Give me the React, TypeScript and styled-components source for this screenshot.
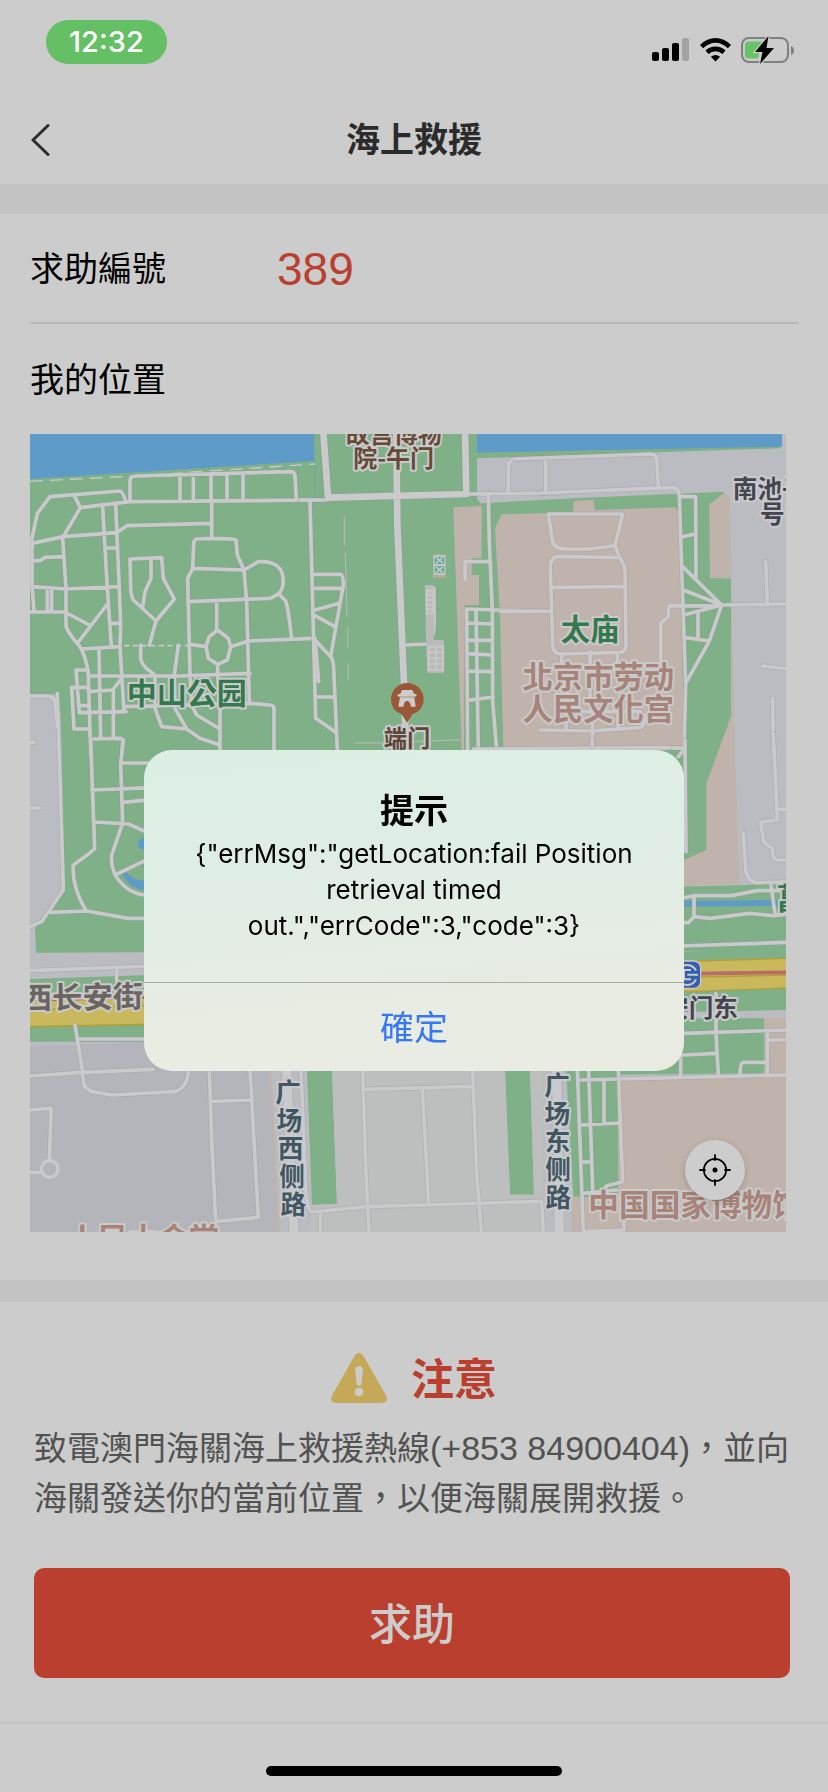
import React from "react";
import styled, { createGlobalStyle } from "styled-components";

const colors = {
  page: "#cccccc",
  band: "#c3c3c3",
  line: "#b7b7b7",
  faintLine: "#c3c3c3",
  ink: "#000000",
  title: "#2b2b2b",
  body: "#525252",
  red: "#bb3f2f",
  blue: "#3478f6",
  pill: "#64bf65",
  amber: "#c5a959",
};

const mapColors = {
  ground: "#bbbcc2",
  block: "#b4b5bb",
  plaza: "#bdbebe",
  park: "#80b088",
  culture: "#c0b3ab",
  water: "#5f9bc9",
  road: "#cacacc",
  avenue: "#c9b85c",
  avenueEdge: "#b09f3c",
};

const sans = `"Liberation Sans", "Noto Sans CJK TC", sans-serif`;
const ui = `Inter, "Noto Sans CJK TC", sans-serif`;

const GlobalStyle = createGlobalStyle`
  *, *::before, *::after { box-sizing: border-box; }
  body { margin: 0; background: ${colors.page}; color: ${colors.ink}; font-family: ${sans}; }
  h1, h2, p, dl, dt, dd { margin: 0; font-weight: 400; }
  button { border: 0; padding: 0; background: none; color: inherit; font: inherit; cursor: pointer; }
`;

const Screen = styled.div`
  display: flex;
  flex-direction: column;
  min-height: 100vh;
  background: ${colors.page};
`;

const StatusBar = styled.div`
  display: flex;
  align-items: flex-start;
  justify-content: space-between;
  height: 96px;
  padding: 20px 34px 0 46px;
`;

const TimePill = styled.time`
  padding: 0 23px;
  border-radius: 22px;
  background: ${colors.pill};
  color: #fff;
  font: 500 29px/44px ${ui};
`;

const StatusIcons = styled.div`
  display: flex;
  align-items: center;
  gap: 10px;
  height: 60px;
`;

const Header = styled.header`
  display: grid;
  grid-template-columns: 60px 1fr 60px;
  align-items: center;
  height: 88px;
`;

const BackButton = styled.button`
  display: flex;
  align-items: center;
  height: 88px;
  padding-left: 30px;
`;

const PageTitle = styled.h1`
  color: ${colors.title};
  font-size: 34px;
  font-weight: 700;
  line-height: 50px;
  text-align: center;
`;

const Band = styled.div<{ $height: number }>`
  height: ${(p) => p.$height}px;
  background: ${colors.band};
`;

const Details = styled.section`
  padding: 0 30px 48px;
`;

const Row = styled.dl`
  display: flex;
  align-items: center;
  height: 110px;
  padding-top: 2px;
  border-bottom: 2px solid ${colors.line};
`;

const RowLabel = styled.dt`
  width: 247px;
  font-size: 34px;
  line-height: 50px;
`;

const RowValue = styled.dd`
  color: ${colors.red};
  font-size: 46px;
  line-height: 50px;
`;

const LocationLabel = styled.h2`
  padding-top: 2px;
  font-size: 34px;
  line-height: 108px;
`;

const MapFrame = styled.div`
  position: relative;
  margin-right: 12px;
`;

const MapDrawing = styled.svg`
  display: block;
  width: 100%;
  height: auto;
`;

const LocateButton = styled.button`
  position: absolute;
  right: 41px;
  bottom: 32px;
  display: grid;
  place-items: center;
  width: 60px;
  height: 60px;
  border-radius: 50%;
  background: #cdcdcd;
  box-shadow: 0 2px 6px rgba(0, 0, 0, 0.18);
`;

const Notice = styled.section`
  padding: 46px 34px 44px;
  border-bottom: 2px solid ${colors.faintLine};
`;

const NoticeHeading = styled.div`
  display: flex;
  align-items: center;
  justify-content: center;
  gap: 24px;
  height: 60px;
  margin-bottom: 16px;
`;

const NoticeTitle = styled.h2`
  padding-top: 4px;
  color: ${colors.red};
  font-size: 43px;
  font-weight: 700;
  line-height: 60px;
`;

const NoticeText = styled.p`
  color: ${colors.body};
  font-size: 33px;
  line-height: 50px;
`;

const Phone = styled.span`
  font-size: 34px;
  line-height: 1;
`;

const HelpButton = styled.button`
  display: block;
  width: calc(100% - 4px);
  height: 110px;
  margin-top: 44px;
  padding-bottom: 4px;
  border-radius: 10px;
  background: ${colors.red};
  color: ${colors.page};
  font-size: 43px;
  font-weight: 500;
`;

const HomeArea = styled.footer`
  display: flex;
  justify-content: center;
  padding: 42px 0 16px;
`;

const HomeIndicator = styled.div`
  width: 296px;
  height: 10px;
  border-radius: 5px;
  background: #000;
`;

const Overlay = styled.div`
  position: fixed;
  inset: 0;
  display: flex;
  align-items: center;
  justify-content: center;
  padding-top: 28px;
`;

const Dialog = styled.div`
  width: 540px;
  max-width: 90%;
  overflow: hidden;
  border-radius: 28px;
  background: linear-gradient(175deg, #dceee3 0%, #dfeee5 35%, #e8ece3 75%, #eaece2 100%);
  text-align: center;
`;

const DialogBody = styled.div`
  padding: 36px 50px 38px;
`;

const DialogTitle = styled.h2`
  font-size: 34px;
  font-weight: 700;
  line-height: 50px;
`;

const DialogText = styled.p`
  font: 400 26px/36px ${ui};
`;

const ConfirmButton = styled.button`
  width: 100%;
  height: 89px;
  padding-bottom: 2px;
  border-top: 1px solid #a9b09f;
  color: ${colors.blue};
  font-size: 34px;
`;

function SignalIcon() {
  return (
    <svg width="38" height="24" viewBox="0 0 38 24" aria-hidden="true">
      <rect x="0" y="14" width="7" height="9" rx="2" />
      <rect x="10" y="10" width="7" height="13" rx="2" />
      <rect x="20" y="5" width="7" height="18" rx="2" />
      <rect x="30" y="0" width="7" height="23" rx="2" fill="#a3a3a3" />
    </svg>
  );
}

function WifiIcon() {
  return (
    <svg width="31" height="24" viewBox="0 0 31 24" aria-hidden="true">
      <g fill="none" stroke="#000" strokeWidth="4.6">
        <path d="M1.6 8.6Q8 2.4 15.5 2.4T29.4 8.6" />
        <path d="M7 14.2Q10.6 10.9 15.5 10.9T24 14.2" />
      </g>
      <path d="M15.5 23.4L10.9 18.8Q15.5 15 20.1 18.8Z" />
    </svg>
  );
}

function BatteryIcon() {
  return (
    <svg width="53" height="28" viewBox="0 0 53 28" aria-hidden="true">
      <rect x="1" y="2" width="46" height="24" rx="7" fill="none" stroke="#808080" strokeWidth="2" />
      <path d="M50 10Q53 11 53 14.500T50 19Z" fill="#808080" />
      <path d="M7.500 5.500H22L17 22.500H7.500Q4 22.500 4 19V9Q4 5.500 7.500 5.500Z" fill="#66c466" />
      <path d="M27.500 0L14 16H21.500L19 28L33 12H25.500Z" stroke={colors.page} strokeWidth="2.400" paintOrder="stroke" />
    </svg>
  );
}

function BackIcon() {
  return (
    <svg width="20" height="34" viewBox="0 0 20 34" aria-hidden="true">
      <path d="M18 2.500L3 17L18 31.500" fill="none" stroke={colors.title} strokeWidth="3" strokeLinecap="round" strokeLinejoin="round" />
    </svg>
  );
}

function WarningIcon() {
  return (
    <svg width="56" height="50" viewBox="0 0 56 50" aria-hidden="true">
      <path d="M23.800 2.400Q28-2.400 32.200 2.400L55 42.500Q58 49.500 51 50H5Q-2 49.500 1 42.500Z" fill={colors.amber} />
      <path d="M24 15.500Q28 10.500 32 15.500L30.300 31.500Q28 34 25.700 31.500Z" fill={colors.page} />
      <circle cx="28" cy="39" r="4.300" fill={colors.page} />
    </svg>
  );
}

function LocateIcon() {
  return (
    <svg width="32" height="32" viewBox="0 0 32 32" aria-hidden="true">
      <circle cx="16" cy="16" r="11.200" fill="none" stroke="#000" strokeWidth="1.700" />
      <circle cx="16" cy="16" r="2.500" />
      <path d="M16 1V6M16 26V31M1 16H6M26 16H31" stroke="#000" strokeWidth="1.800" strokeLinecap="round" />
    </svg>
  );
}

type RoadsProps = { x: number; y: number; d: string; width?: number };

function Roads({ x, y, d, width = 11 }: RoadsProps) {
  return (
    <g transform={`translate(${x} ${y})`} fill="none" strokeLinejoin="round" strokeLinecap="round">
      <path d={d} stroke="#8f9399" strokeOpacity="0.35" strokeWidth={width + 4} />
      <path d={d} stroke={mapColors.road} strokeWidth={width} />
    </g>
  );
}

type LabelProps = {
  x: number;
  y: number;
  size: number;
  color: string;
  anchor?: "start" | "middle";
  rotate?: number;
  children: string;
};

function Label({ x, y, size, color, anchor = "middle", rotate = 0, children }: LabelProps) {
  return (
    <text
      x={x}
      y={y}
      fontSize={size}
      fill={color}
      textAnchor={anchor}
      transform={rotate ? `rotate(${rotate} ${x} ${y})` : undefined}
      stroke={mapColors.road}
      strokeWidth="12"
      strokeLinejoin="round"
      paintOrder="stroke"
      fontFamily={`"Noto Sans CJK SC", sans-serif`}
      fontWeight="700"
    >
      {children}
    </text>
  );
}

const westParkRoads = `
M330 228V165Q330 155 350 153L810 140Q825 140 825 155L829 222
M480 152V225M520 150V225M573 148V230M621 146V225M669 144V225
M36 340L52 265L90 215L300 198Q308 198 318 232M163 212L181 248L130 335
M181 248L330 230L900 225M36 355L130 335L290 323L320 302L575 295M575 230V340
M36 345V480L42 560M36 407H60L75 397L130 395
M128 340L138 490V600Q140 620 180 665Q200 700 205 750L212 990
M36 485L138 492L298 485M82 488V560M95 490V560M30 561H135L208 600
M248 245L262 490L274 665M287 240L297 470L302 600L300 665L312 860
M258 369H290M270 595H300M260 540L172 655M185 672L300 665
M205 753H480L690 745M237 672L242 940M205 800L278 795L305 760M280 795V940
M205 735H168L172 785M205 787H155L162 912H208M172 787L178 863L318 860M175 842H205
M210 942L300 940Q308 940 308 950L305 990
M330 402L425 398L430 460L463 522L408 588L340 525Q332 510 332 490ZM393 400V460L375 500L368 545M408 588L388 660
M362 660V700Q365 720 385 735L405 750V850L425 905L500 912
M475 660L463 750L465 850L500 912L540 940L600 960
M577 340L530 342Q523 343 521 355L518 430L672 435L652 390L648 345Q645 341 577 340
M518 430L503 460L510 750L515 840L530 870L600 912M672 435L680 530L688 830
M672 435L715 410Q790 405 790 470Q788 500 770 510L750 520L505 530M775 505L797 528Q805 550 814 635
M590 530V615M593 615L625 640L632 665L622 705L593 718L565 700L558 665L568 635ZM593 718V750L600 840V990
M510 658L558 665M632 665L685 648L880 640M315 845L690 835L750 840Q762 842 762 850V990`;

const axisRoads = `
M500 207L780 204M565 210L568 350L577 560L578 830L590 975
M30 228L47 880L105 920M40 448H122Q130 450 130 480L92 695M42 490H130M45 555L118 535M45 572L105 605
M40 640L92 695Q100 705 101 730L112 975M45 640L56 770M48 816H100
M495 465V410H572M503 975L500 552L750 559M528 555L535 975
M500 594L575 597M503 646H575M503 686L575 690M503 738L575 740M503 826L580 816
M315 660L380 657Q402 640 402 600V490M625 205V130Q625 105 645 102L720 99M0 225H84`;

const templeRoads = `
M-75 102L330 87Q348 88 350 100L355 185M0 204L400 187Q415 190 418 210L425 430L437 780L432 985
M17 98V204M422 215H467L468 455M425 336L467 326M428 425L545 540L738 537M430 495L545 540
M432 570L545 540L508 648L437 775M474 560V640M437 638L508 648M545 543L390 542Q385 545 385 575L362 595V720
M677 410L682 535M668 723L745 732M698 820L700 985
M25 267H248L225 362L150 372H75Q40 370 37 345Z
M225 362L240 400Q253 415 255 440L258 660Q258 680 240 682L60 687Q40 685 38 660L31 430Q30 395 55 394L238 398
M31 488L255 484M-120 559H31M0 915L150 918L300 908Q315 905 315 870M150 680V820M157 860V970
M65 690V740M232 685V740M-200 972L430 968M80 860H300M78 860V915M234 860V910`;

const southWestRoads = `
M112 -140L130 450L65 545L30 560M30 -132H80Q105 -132 105 -110L112 -40M30 7H42M30 204H62
M212 0L224 325Q222 332 160 375Q155 440 198 512M310 0L302 70L308 250L275 345Q272 375 285 405Q320 460 375 465
M305 69H400M215 150L400 143M308 187L400 178M225 246L325 252L400 285M285 405L400 350
M90 517L200 513L325 535H400M30 692L400 678M290 682V725M165 855L187 990Q190 1035 195 1040L215 1055L275 1065L465 1055Q505 1040 505 990
M172 897H400M30 1008L187 997L400 988M568 990L575 1200L587 1445L715 1432L690 990M575 1084L692 1080
M30 1110L90 1105Q95 1105 93 1115L88 1265M30 1297H65`;

const plazaRoads = `
M123 93L138 460Q145 515 155 516L320 500L845 484L850 576M308 93L318 400L327 576
M308 148L640 139M638 93L650 400L664 576M487 148L506 490M181 516V576`;

const southEastRoads = `
M375 0L378 335M340 24H375M355 50L375 25M97 0V20M640 -20L652 240L602 246L610 300Q612 312 638 325Q635 355 650 360H678M650 209H678
M550 280L557 390Q560 420 585 428L678 426M365 475L400 467H515L590 452H678M402 470V530L385 548H365M402 530L450 535L570 520L640 527L678 523M632 430L645 520
M365 618L678 607M372 880L678 870M468 760V880L475 1005M372 945L468 940M362 940V1012M622 875V1005M622 900H678M622 967H550Q540 970 540 1000
M55 1020L678 1005M52 990L70 1475M86 990L98 1350M132 1020V1145M175 990L188 1325L150 1335Q135 1335 135 1350
M60 1155L180 1149M70 1266H95M70 1360L170 1350M70 1475L192 1470V1435`;

function CityMap() {
  return (
    <MapDrawing viewBox="90 1302 2268 2394" role="img" aria-label="我的位置地圖">
      <rect x="90" y="1302" width="2268" height="2394" fill={mapColors.ground} />

      <g fill={mapColors.park}>
        <path d="M90 1302H2346L2340 1345L1431 1375V1495L1440 1510L1720 1495L2172 1475V1735H2193V2150L2120 2350V2550L2065 2585L1800 2600V2850L108 2858L105 2785L195 2670L182 2143L168 2083H90Z" />
        <path d="M90 2937L1200 2900V3125H90Z" />
        <path d="M1740 2668L2358 2652V2848L1740 2860ZM1740 2865L2358 2845V3030L1740 3042ZM1740 3055H2292V3220L1700 3225Z" />
        <path d="M921 3213H996L1011 3611L936 3615ZM1515 3213H1590L1602 3584H1530ZM1698 3205H1855V3590H1720Z" />
      </g>

      <g fill={mapColors.water}>
        <path d="M90 1302H942L945 1533L945 1383L90 1437ZM1431 1302H2346V1340L1431 1358Z" />
        <path d="M1750 2706L2340 2700V2718L1750 2722Z" />
        <circle cx="430" cy="2531" r="17" />
        <path d="M365 2620Q390 2670 440 2670V2642Q400 2642 380 2618Z" />
      </g>
      <path d="M90 1444L400 1428L945 1392" fill="none" stroke={mapColors.road} strokeWidth="4" strokeDasharray="38 22" />

      <g fill={mapColors.culture}>
        <path d="M1360 1522L1445 1518V1675H1415V1725H1437V1815H1395L1392 2250H1385Z" />
        <path d="M1485 1585L1505 1543L1720 1537V1503L1780 1499L1785 1530L2025 1522L2035 1532L2055 2250H1510L1500 1850Z" />
        <path d="M2128 1513L2172 1480L2190 1490L2195 1735H2130ZM2193 1735L2205 2260L2220 2650L2052 2658V2580L2120 2550V2350L2193 2150Z" />
        <path d="M1852 3235L2358 3222V3696H1715V3592H1855ZM2292 3055H2358V3225H2292Z" />
      </g>

      <path d="M90 3140L800 3110L840 3696H90Z" fill={mapColors.block} />
      <path d="M810 3210L835 3696" stroke={mapColors.culture} strokeWidth="7" />
      <path d="M996 3213H1515L1530 3584H1602L1590 3213H1630L1630 3696H930V3615L1011 3611Z" fill={mapColors.plaza} />

      <g>
        <path d="M90 2998L1200 2964V3060L90 3080Z" fill={mapColors.avenue} />
        <path d="M90 3080L1200 3060M90 2992L1200 2964M90 3030L1200 2990" fill="none" stroke={mapColors.avenueEdge} strokeWidth="5" />
        <path d="M90 3000L1200 2975" stroke="#b86b68" strokeWidth="9" />
        <path d="M1740 2890L2358 2875V2964L1740 2987Z" fill={mapColors.avenue} />
        <path d="M1740 2893L2358 2875M1740 2987L2358 2964M1740 2940L2358 2925" stroke={mapColors.avenueEdge} strokeWidth="4" />
        <path d="M1740 2926L2358 2917" stroke="#b86b68" strokeWidth="11" />
      </g>

      <Roads x={60} y={1275} d={westParkRoads} />
      <Roads x={900} y={1275} d={axisRoads} />
      <Roads x={1620} y={1275} d={templeRoads} />
      <Roads x={60} y={2220} d={southWestRoads} />
      <Roads x={780} y={3120} d={plazaRoads} />
      <Roads x={1680} y={2220} d={southEastRoads} />
      <Roads x={900} y={1275} width={20} d="M70 20L84 218L500 207M495 20L499 207M289 30L292 300L312 775L318 980" />
      <Roads x={780} y={3120} width={28} d="M80 90L102 590M890 90L898 590" />
      <path d="M372 1937H570" stroke={mapColors.road} strokeWidth="5" strokeDasharray="16 10" />
      <circle cx="149" cy="3507" r="25" fill={mapColors.block} stroke={mapColors.road} strokeWidth="10" />
      <g fill="none" stroke="#b9bbb9" strokeWidth="3">
        <path d="M1033 1550V1638M1036 1660L1041 1850M1043 1880V1945M1045 1990V2040M1065 2229H1130L1390 2219" />
      </g>

      <g>
        <path d="M1299 1663H1337V1733H1299Z" fill="#bda99a" />
        <path d="M1301 1666H1336V1724H1301Z" fill="#cbd2ce" />
        <path d="M1304 1670H1333V1693H1304ZM1304 1698H1333V1720H1304Z" fill="#69a99d" />
        <path d="M1308 1672L1329 1690M1329 1672L1308 1690M1308 1700L1329 1718M1329 1700L1308 1718" stroke="#cbd2ce" strokeWidth="4" />
        <path d="M1275 1755H1302V1920H1332V2018H1282L1278 1925Z" fill="#b9bab9" />
        <path d="M1280 1772V1840H1298V1772ZM1280 1786H1298M1280 1800H1298M1280 1815H1298M1280 1828H1298M1286 1940V2010H1330V1940ZM1286 1957H1330M1286 1974H1330M1286 1992H1330M1308 1940V2010" fill="none" stroke={mapColors.road} strokeWidth="5" />
      </g>

      <g>
        <path d="M1221 2168L1205 2143Q1173 2131 1173 2098A49 49 0 0 1 1271 2098Q1271 2131 1237 2143Z" fill="#9a5836" />
        <path d="M1206 2070H1237L1241 2080L1251 2085L1246 2090H1196L1191 2085L1202 2080ZM1200 2092H1243L1247 2120H1232V2112Q1221 2093 1211 2112V2120H1195Z" fill="#cccccc" />
      </g>

      <g>
        <rect x="2020" y="2883" width="82" height="82" rx="20" fill="#355fac" stroke={mapColors.road} strokeWidth="4" />
        <g fill="none" stroke="#cccccc" strokeWidth="6">
          <path d="M2088 2912A30 30 0 1 0 2088 2938" />
          <path d="M2073 2910H2052V2938H2073M2062 2924H2094" />
        </g>
      </g>

      <Label x={1181} y={1329} size={72} color="#654a35">故宫博物</Label>
      <Label x={1181} y={1401} size={72} color="#654a35">院-午门</Label>
      <Label x={560} y={2111} size={90} color="#34794d">中山公园</Label>
      <Label x={1221} y={2242} size={70} color="#5c4636">端门</Label>
      <Label x={1770} y={1921} size={88} color="#34794d">太庙</Label>
      <Label x={1795} y={2063} size={91} color="#a78477">北京市劳动</Label>
      <Label x={1795} y={2160} size={91} color="#a78477">人民文化宫</Label>
      <Label x={2198} y={1494} size={74} color="#43454f" anchor="start">南池子</Label>
      <Label x={2280} y={1569} size={74} color="#43454f" anchor="start">号</Label>
      <Label x={66} y={3028} size={91} color="#6a665f" anchor="start" rotate={-1}>西长安街</Label>
      <Label x={1918} y={3050} size={74} color="#43454f" anchor="start">天安门东</Label>
      <Label x={2330} y={2727} size={88} color="#34794d" anchor="start">菖</Label>
      <Label x={1765} y={3648} size={92} color="#a78477" anchor="start">中国国家博物馆</Label>
      <Label x={430} y={3750} size={91} color="#a78477">人民大会堂</Label>
      {Array.from("广场西侧路").map((char, i) => (
        <Label key={char} x={864 + i * 4} y={3305 + i * 84} size={77} color="#405763">{char}</Label>
      ))}
      {Array.from("广场东侧路").map((char, i) => (
        <Label key={char} x={1671 + i} y={3286 + i * 84} size={77} color="#405763">{char}</Label>
      ))}
    </MapDrawing>
  );
}

export default function App() {
  return (
    <>
      <GlobalStyle />
      <Screen lang="zh-Hant">
        <StatusBar>
          <TimePill>12:32</TimePill>
          <StatusIcons>
            <SignalIcon />
            <WifiIcon />
            <BatteryIcon />
          </StatusIcons>
        </StatusBar>
        <Header>
          <BackButton type="button" aria-label="返回">
            <BackIcon />
          </BackButton>
          <PageTitle>海上救援</PageTitle>
        </Header>
        <Band $height={30} />
        <Details>
          <Row>
            <RowLabel>求助編號</RowLabel>
            <RowValue>389</RowValue>
          </Row>
          <LocationLabel>我的位置</LocationLabel>
          <MapFrame>
            <CityMap />
            <LocateButton type="button" aria-label="定位">
              <LocateIcon />
            </LocateButton>
          </MapFrame>
        </Details>
        <Band $height={22} />
        <Notice>
          <NoticeHeading>
            <WarningIcon />
            <NoticeTitle>注意</NoticeTitle>
          </NoticeHeading>
          <NoticeText>
            致電澳門海關海上救援熱線<Phone>(+853 84900404)</Phone>，並向海關發送你的當前位置，以便海關展開救援。
          </NoticeText>
          <HelpButton type="button">求助</HelpButton>
        </Notice>
        <HomeArea>
          <HomeIndicator />
        </HomeArea>
      </Screen>
      <Overlay lang="zh-Hant">
        <Dialog role="alertdialog" aria-modal="true" aria-labelledby="dialog-title" aria-describedby="dialog-text">
          <DialogBody>
            <DialogTitle id="dialog-title">提示</DialogTitle>
            <DialogText id="dialog-text">
              {`{"errMsg":"getLocation:fail Position retrieval timed out.","errCode":3,"code":3}`}
            </DialogText>
          </DialogBody>
          <ConfirmButton type="button">確定</ConfirmButton>
        </Dialog>
      </Overlay>
    </>
  );
}
